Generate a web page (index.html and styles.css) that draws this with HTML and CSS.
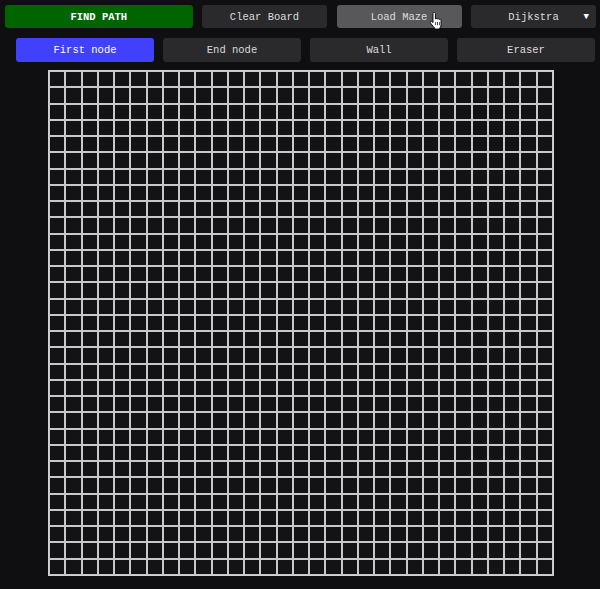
FILE: index.html
```html
<!DOCTYPE html>
<html>
<head>
<meta charset="utf-8">
<link rel="stylesheet" href="styles.css">
</head>
<body>
<div class="toolbar">
  <button class="btn btn-find">FIND PATH</button>
  <button class="btn">Clear Board</button>
  <button class="btn btn-hover">Load Maze
    <svg class="cursor" width="14" height="18" viewBox="0 0 14 18">
      <path d="M4 1.5c0-.8.6-1.3 1.2-1.3s1.2.5 1.2 1.3V7l.2-.1c.3-.6 1.6-.6 1.9.2.4-.5 1.5-.4 1.8.3.5-.3 1.6-.1 1.7.8v4.5c0 1.600-.6 2.8-1.3 3.6V17H5.5v-1.2C4.5 15 3.6 13.6 2.3 12 1.5 11 .8 10.2 1.3 9.6c.5-.6 1.5-.3 2.7 1V1.5z" fill="#fff" stroke="#000" stroke-width="0.9"/>
      <path d="M6.6 10v3.2M8.5 10v3.2M10.4 10v3.2" stroke="#000" stroke-width="0.7"/>
    </svg>
  </button>
  <button class="btn btn-select">Dijkstra<span class="arrow">▼</span></button>
</div>
<div class="modes">
  <button class="btn btn-active">First node</button>
  <button class="btn">End node</button>
  <button class="btn">Wall</button>
  <button class="btn">Eraser</button>
</div>
<div class="board" id="board"></div>
<script src="script.js"></script>
</body>
</html>
```
FILE: script.js
```js
const board = document.getElementById('board');
for (let i = 0; i < 31 * 31; i++) {
  const c = document.createElement('div');
  c.className = 'cell';
  board.appendChild(c);
}
```
FILE: styles.css
```css
html, body {
  margin: 0;
  padding: 0;
  background: #0f0e10;
  font-family: "Liberation Mono", "Courier New", monospace;
}
.toolbar {
  display: flex;
  gap: 9.5px;
  padding: 5px 4px 0 5px;
  height: 23px;
}
.modes {
  display: flex;
  gap: 9px;
  padding: 0 5px 0 16px;
  margin-top: 10px;
  height: 24px;
}
.btn {
  flex: 1;
  border: none;
  border-radius: 3px;
  background: #2a292c;
  color: #dcdcdc;
  font-family: "Liberation Mono", "Courier New", monospace;
  font-size: 10.5px;
  padding: 0;
  position: relative;
  display: flex;
  align-items: center;
  justify-content: center;
}
.btn-find {
  flex: 1.5;
  background: #006400;
  color: #fff;
  font-weight: bold;
}
.btn-hover {
  background: #58575a;
}
.btn-active {
  background: #4141fb;
  color: #fff;
}
.btn-select .arrow {
  position: absolute;
  right: 7px;
  top: 7px;
  font-size: 9px;
  color: #fff;
}
.cursor {
  position: absolute;
  left: 92px;
  top: 7px;
}
.board {
  margin: 8px 0 0 48px;
  width: 506px;
  height: 506px;
  box-sizing: border-box;
  border: 1px solid #d0d0d0;
  display: grid;
  grid-template-columns: repeat(31, 1fr);
  grid-template-rows: repeat(31, 1fr);
}
.cell {
  border: 1px solid #c8c8c8;
  background: #131214;
}
```
